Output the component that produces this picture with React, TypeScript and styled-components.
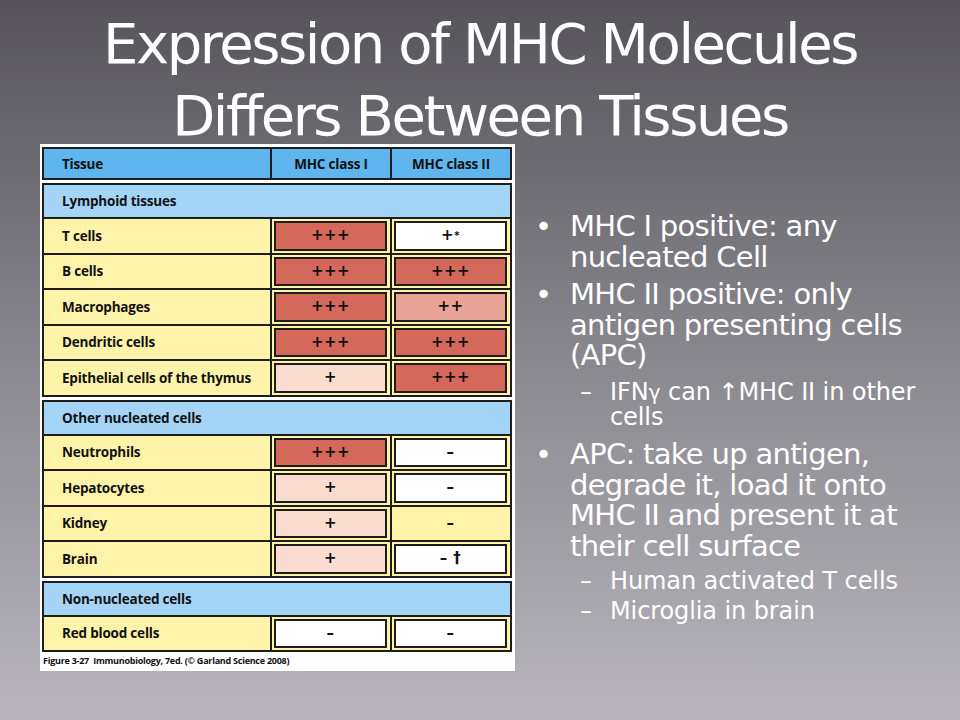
import React from "react";
import styled, { createGlobalStyle } from "styled-components";

const GlobalStyle = createGlobalStyle`
  html, body { margin: 0; padding: 0; }
  body { width: 960px; height: 720px; overflow: hidden; }
`;

const Slide = styled.div`
  width: 960px;
  height: 720px;
  box-sizing: border-box;
  background: linear-gradient(180deg, #56545a 0%, #8a888f 50%, #b8b5bd 100%);
  display: flex;
  flex-direction: column;
  font-family: "DejaVu Sans", Verdana, sans-serif;
  color: #ffffff;
`;

const Title = styled.h1`
  margin: 0;
  height: 144px;
  box-sizing: border-box;
  padding-top: 8px;
  font-size: 56px;
  line-height: 72px;
  font-weight: normal;
  letter-spacing: -2.4px;
  text-align: center;
  white-space: nowrap;
`;

const Body = styled.div`
  display: flex;
  align-items: flex-start;
  padding-left: 40px;
`;

const Figure = styled.div`
  width: 475px;
  box-sizing: border-box;
  background: #ffffff;
  padding: 3px 3px 2px 2px;
  display: flex;
  flex-direction: column;
  gap: 3px;
  font-family: "Open Sans", "DejaVu Sans", sans-serif;
  font-weight: 700;
  color: #111;
`;

const Group = styled.div`
  border: 2px solid #1d1d1d;
  display: flex;
  flex-direction: column;
`;

const HeaderRow = styled.div`
  display: grid;
  grid-template-columns: 226px 120px 120px;
  height: 29px;
  background: #5fb5ee;
`;

const HeaderCell = styled.div<{ $first?: boolean }>`
  display: flex;
  align-items: center;
  justify-content: ${(p) => (p.$first ? "flex-start" : "center")};
  padding-left: ${(p) => (p.$first ? "18px" : "0")};
  border-left: ${(p) => (p.$first ? "none" : "2px solid #1d1d1d")};
  font-size: 13.5px;
  letter-spacing: -0.2px;
`;

const SectionRow = styled.div`
  height: 32px;
  background: #a4d5f7;
  display: flex;
  align-items: center;
  padding-left: 18px;
  font-size: 13.5px;
  letter-spacing: -0.2px;
`;

const DataRow = styled.div`
  display: grid;
  grid-template-columns: 226px 120px 120px;
  height: 35.5px;
  box-sizing: border-box;
  border-top: 2px solid #1d1d1d;
  background: #fdf4a9;
`;

const NameCell = styled.div`
  display: flex;
  align-items: center;
  padding-left: 18px;
  font-size: 13.5px;
  letter-spacing: -0.2px;
  white-space: nowrap;
`;

const ValueCell = styled.div`
  border-left: 2px solid #1d1d1d;
  padding: 2px 3px 2px 2px;
  display: flex;
`;

type Level = "high" | "mid" | "low" | "none" | "bare";

const levelColor: Record<Level, string> = {
  high: "#d4685a",
  mid: "#e8a396",
  low: "#fadcd0",
  none: "#ffffff",
  bare: "transparent",
};

const LevelBox = styled.div<{ $level: Level }>`
  flex: 1;
  box-sizing: border-box;
  border: ${(p) => (p.$level === "bare" ? "2px solid transparent" : "2px solid #1d1d1d")};
  background: ${(p) => levelColor[p.$level]};
  display: flex;
  align-items: center;
  justify-content: center;
  font-family: "DejaVu Sans", sans-serif;
  font-size: 15px;
  letter-spacing: 0.5px;
  line-height: 1;
`;

const Sup = styled.sup`
  font-size: 10px;
  vertical-align: 5px;
`;

const Caption = styled.div`
  margin-top: 0px;
  padding-bottom: 2px;
  font-size: 9px;
  line-height: 12px;
  letter-spacing: -0.25px;
  white-space: nowrap;
  padding-left: 1px;
`;

const Bullets = styled.div`
  margin-left: 20px;
  padding-top: 67px;
  display: flex;
  flex-direction: column;
`;

const Item = styled.div<{ $sub?: boolean; $gap: number }>`
  display: flex;
  margin-top: ${(p) => p.$gap}px;
  font-size: ${(p) => (p.$sub ? "24px" : "29px")};
  line-height: ${(p) => (p.$sub ? "24px" : "30.5px")};
  letter-spacing: ${(p) => (p.$sub ? "-0.1px" : "-0.7px")};
  white-space: nowrap;
`;

const Marker = styled.span<{ $sub?: boolean }>`
  flex: none;
  width: ${(p) => (p.$sub ? "30px" : "35px")};
  margin-left: ${(p) => (p.$sub ? "45px" : "0")};
`;

const Greek = styled.span`
  font-size: 0.85em;
`;

type Row = { name: string; c1: [string, Level]; c2: [string, Level] };
type Section = { label: string; rows: Row[] };

const sections: Section[] = [
  {
    label: "Lymphoid tissues",
    rows: [
      { name: "T cells", c1: ["+++", "high"], c2: ["+*", "none"] },
      { name: "B cells", c1: ["+++", "high"], c2: ["+++", "high"] },
      { name: "Macrophages", c1: ["+++", "high"], c2: ["++", "mid"] },
      { name: "Dendritic cells", c1: ["+++", "high"], c2: ["+++", "high"] },
      { name: "Epithelial cells of the thymus", c1: ["+", "low"], c2: ["+++", "high"] },
    ],
  },
  {
    label: "Other nucleated cells",
    rows: [
      { name: "Neutrophils", c1: ["+++", "high"], c2: ["–", "none"] },
      { name: "Hepatocytes", c1: ["+", "low"], c2: ["–", "none"] },
      { name: "Kidney", c1: ["+", "low"], c2: ["–", "bare"] },
      { name: "Brain", c1: ["+", "low"], c2: ["– †", "none"] },
    ],
  },
  {
    label: "Non-nucleated cells",
    rows: [{ name: "Red blood cells", c1: ["–", "none"], c2: ["–", "none"] }],
  },
];

function renderValue(v: string) {
  if (v === "+*") {
    return (
      <>
        +<Sup>*</Sup>
      </>
    );
  }
  return v;
}

export default function App() {
  return (
    <>
      <GlobalStyle />
      <Slide>
        <Title>
          Expression of MHC Molecules
          <br />
          Differs Between Tissues
        </Title>
        <Body>
          <Figure>
            <Group>
              <HeaderRow>
                <HeaderCell $first>Tissue</HeaderCell>
                <HeaderCell>MHC class I</HeaderCell>
                <HeaderCell>MHC class II</HeaderCell>
              </HeaderRow>
            </Group>
            {sections.map((s) => (
              <Group key={s.label}>
                <SectionRow>{s.label}</SectionRow>
                {s.rows.map((r) => (
                  <DataRow key={r.name}>
                    <NameCell>{r.name}</NameCell>
                    <ValueCell>
                      <LevelBox $level={r.c1[1]}>{renderValue(r.c1[0])}</LevelBox>
                    </ValueCell>
                    <ValueCell>
                      <LevelBox $level={r.c2[1]}>{renderValue(r.c2[0])}</LevelBox>
                    </ValueCell>
                  </DataRow>
                ))}
              </Group>
            ))}
            <Caption>
              Figure 3-27&nbsp; Immunobiology, 7ed. (© Garland Science 2008)
            </Caption>
          </Figure>
          <Bullets>
            <Item $gap={0}>
              <Marker>•</Marker>
              <span>
                MHC I positive: any
                <br />
                nucleated Cell
              </span>
            </Item>
            <Item $gap={7}>
              <Marker>•</Marker>
              <span>
                MHC II positive: only
                <br />
                antigen presenting cells
                <br />
                (APC)
              </span>
            </Item>
            <Item $sub $gap={9.5}>
              <Marker $sub>–</Marker>
              <span>
                IFN<Greek>γ</Greek> can ↑MHC II in other
                <br />
                cells
              </span>
            </Item>
            <Item $gap={10}>
              <Marker>•</Marker>
              <span>
                APC: take up antigen,
                <br />
                degrade it, load it onto
                <br />
                MHC II and present it at
                <br />
                their cell surface
              </span>
            </Item>
            <Item $sub $gap={8}>
              <Marker $sub>–</Marker>
              <span>Human activated T cells</span>
            </Item>
            <Item $sub $gap={6}>
              <Marker $sub>–</Marker>
              <span>Microglia in brain</span>
            </Item>
          </Bullets>
        </Body>
      </Slide>
    </>
  );
}
